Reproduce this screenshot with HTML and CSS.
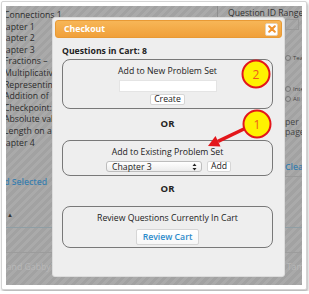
FILE: index.html
```html
<!DOCTYPE html>
<html lang="en">
<head>
    <meta charset="UTF-8">
    <meta name="viewport" content="width=device-width, initial-scale=1.0">
    <title>Checkout</title>
    <link rel="stylesheet" href="styles.css">
</head>
<body>
    <div class="frame">
        <div class="page">
            <div class="columns">
                <div class="side">
                    <ul class="chapters">
                        <li class="sub">Connections 1</li>
                        <li>Chapter 1</li>
                        <li>Chapter 2</li>
                        <li>Chapter 3</li>
                        <li class="sub">Fractions &ndash;</li>
                        <li class="sub">Multiplicative</li>
                        <li class="sub">Representing</li>
                        <li class="sub">Addition of</li>
                        <li class="sub">Checkpoint:</li>
                        <li class="sub">Absolute value</li>
                        <li class="sub">Length on a</li>
                        <li>Chapter 4</li>
                    </ul>
                    <div class="side-link">Add Selected</div>
                </div>
                <div class="filters">
                    <div class="range">Question ID Range:</div>
                    <div class="strip">
                        <div class="range-box"></div>
                        <div class="opt opt-team"><span class="radio"></span>Team</div>
                        <div class="opt opt-inter"><span class="radio"></span>Inter</div>
                        <div class="opt"><span class="radio"></span>All</div>
                        <div class="per">per page</div>
                        <div class="clear">Clear</div>
                    </div>
                </div>
            </div>
            <div class="table">
                <div class="thead"><span class="sort">&#9650;</span></div>
                <div class="trow">Question</div>
                <div class="trow last"></div>
            </div>
            <div class="footnote">Tama's and Gabby's mirrors are back to back at the points on a number line. Tama</div>

            <div class="dialog">
                <div class="dialog-head">
                    <span class="dialog-title">Checkout</span>
                    <span class="close">
                        <svg width="8" height="8" viewBox="0 0 8 8"><path d="M1.2 1.2L6.8 6.8M6.8 1.2L1.2 6.8" stroke="#f0932e" stroke-width="2" stroke-linecap="round"/></svg>
                    </span>
                </div>
                <div class="dialog-body">
                    <div class="count">Questions in Cart: 8</div>
                    <div class="panel panel-new">
                        <div class="panel-title">Add to New Problem Set</div>
                        <input class="text-input" type="text">
                        <div><button class="btn">Create</button></div>
                    </div>
                    <div class="or or-first">OR</div>
                    <div class="panel panel-existing">
                        <div class="panel-title">Add to Existing Problem Set</div>
                        <div class="row">
                            <div class="select">
                                <span>Chapter 3</span>
                                <svg width="5" height="8" viewBox="0 0 5 8"><path d="M0.5 3L2.5 0.6L4.5 3ZM0.5 5L2.5 7.4L4.5 5Z" fill="#222"/></svg>
                            </div>
                            <button class="btn">Add</button>
                        </div>
                    </div>
                    <div class="or or-second">OR</div>
                    <div class="panel panel-review">
                        <div class="panel-title">Review Questions Currently In Cart</div>
                        <button class="btn btn-review">Review Cart</button>
                    </div>
                </div>
            </div>

            <svg class="callouts" width="296" height="279" viewBox="0 0 296 279">
                <circle cx="250" cy="68" r="13.5" fill="#fff200" stroke="#e3161b" stroke-width="2"/>
                <text x="250" y="72.5" text-anchor="middle" class="callout-num">2</text>
                <line x1="240" y1="122" x2="212" y2="135.3" stroke="#e3161b" stroke-width="3.5"/>
                <polygon points="202,140 214.5,140.5 209.5,130" fill="#e3161b"/>
                <circle cx="251" cy="118" r="13.5" fill="#fff200" stroke="#e3161b" stroke-width="2"/>
                <text x="251" y="122.5" text-anchor="middle" class="callout-num">1</text>
            </svg>
        </div>
    </div>
</body>
</html>
```

FILE: styles.css
```css
body {
    margin: 0;
    background-color: #fff;
    font-family: "Open Sans", "Liberation Sans", sans-serif;
}
.frame {
    margin: 1px;
    width: 296px;
    padding: 4px;
    border: 1px solid #d4d4d4;
    border-radius: 2px;
    background-color: #fff;
    box-shadow: 1px 2px 3px rgba(0, 0, 0, 0.3);
}
.page {
    position: relative;
    overflow: hidden;
    height: 279px;
    font-size: 8.7px;
    color: #2c2c2c;
    background: repeating-linear-gradient(135deg, #aaaaaa 0 3px, #a2a2a2 3px 6px);
}
.columns {
    display: grid;
    grid-template-columns: 211px 1fr;
    height: 200px;
}
.chapters {
    list-style: none;
    margin: 0;
    padding: 4px 0 0;
    line-height: 11.6px;
    white-space: nowrap;
}
.chapters li {
    margin-left: -11px;
}
.chapters li.sub {
    margin-left: -2px;
}
.side-link {
    margin-top: 27px;
    margin-left: -13px;
    font-weight: 600;
    color: #3b7fae;
}
.filters {
    border-left: 1px solid #8e8e8e;
    padding-left: 10px;
}
.range {
    line-height: 14px;
    color: #333;
}
.strip {
    margin-left: 57px;
    color: #444;
}
.range-box {
    width: 12px;
    height: 9px;
    margin-top: -1px;
    border: 1px solid #999;
}
.opt {
    display: flex;
    align-items: center;
    gap: 2px;
    font-size: 6px;
    line-height: 10px;
}
.opt-team {
    margin-top: 23px;
}
.opt-inter {
    margin-top: 21px;
}
.radio {
    width: 4px;
    height: 4px;
    border: 1px solid #777;
    border-radius: 50%;
}
.per {
    margin-top: 13px;
    line-height: 10px;
}
.clear {
    margin-top: 25px;
    font-weight: 600;
    color: #3b7fae;
    line-height: 10px;
    padding-bottom: 4px;
    border-bottom: 1px solid #999;
}
.table {
    margin-top: 2px;
}
.thead {
    height: 19px;
    border-bottom: 1px solid #8f9ea4;
}
.sort {
    display: inline-block;
    margin-left: 1px;
    font-size: 6px;
    color: #333;
}
.trow {
    height: 24px;
    line-height: 24px;
    padding-left: 6px;
    color: #b2a58f;
    border-bottom: 1px solid #9c9c9c;
    text-indent: -50px;
    overflow: hidden;
}
.trow.last {
    border-bottom: none;
    height: 8px;
}
.footnote {
    white-space: nowrap;
    margin-left: -30px;
    line-height: 12px;
    color: #b8b8b8;
}

.dialog {
    position: absolute;
    left: 46px;
    top: 11px;
    width: 227px;
    height: 254px;
    padding: 2px;
    border: 1px solid #dcdcdc;
    border-radius: 3px;
    background-color: #eeeeee;
}
.dialog-head {
    display: flex;
    justify-content: space-between;
    align-items: center;
    height: 16px;
    padding: 0 3px 0 8px;
    border: 1px solid #e89a35;
    border-radius: 3px;
    background: linear-gradient(#f7b657, #f0a03a);
}
.dialog-title {
    color: #fff;
    font-weight: 700;
    font-size: 8.7px;
}
.close {
    display: flex;
    align-items: center;
    justify-content: center;
    width: 11px;
    height: 11px;
    border: 1px solid #e6d2b4;
    border-radius: 2px;
    background-color: #fff;
}
.dialog-body {
    padding: 0 9px 0 7px;
}
.count {
    margin-top: 7px;
    line-height: 12px;
    font-weight: 700;
    color: #222;
}
.panel {
    margin-top: 2px;
    padding: 5px 0 3px;
    border: 1px solid #787878;
    border-radius: 8px;
    text-align: center;
    color: #222;
}
.panel-title {
    line-height: 12px;
}
.text-input {
    display: block;
    width: 98px;
    height: 12px;
    margin: 3px auto 1px;
    padding: 0;
    border: 1px solid #e4e4e4;
    box-sizing: border-box;
    background-color: #fff;
}
.btn {
    height: 11px;
    padding: 0 3px;
    border: 1px solid #d6d6d6;
    border-radius: 2px;
    background-color: #fff;
    font-family: inherit;
    font-size: 8.7px;
    line-height: 9px;
    color: #222;
}
.or {
    text-align: center;
    font-weight: 700;
    font-size: 9.5px;
    color: #222;
}
.or-first {
    padding: 8px 0 9px;
    line-height: 14px;
}
.or-second {
    padding: 6px 0 10px;
    line-height: 14px;
}
.or + .panel {
    margin-top: 0;
}
.row {
    display: flex;
    align-items: center;
    gap: 5px;
    margin-top: 3px;
    padding-left: 43px;
}
.select {
    flex: none;
    display: flex;
    justify-content: space-between;
    align-items: center;
    width: 96px;
    height: 11px;
    box-sizing: border-box;
    padding: 0 4px 0 5px;
    border: 1px solid #bdbdbd;
    border-radius: 3px;
    background: linear-gradient(#ffffff, #ececec);
    text-align: left;
}
.btn-review {
    height: 16px;
    margin-top: 5px;
    padding: 0 6px;
    font-weight: 600;
    color: #2b8bcb;
    background: linear-gradient(#ffffff, #f7f7f7);
}
.panel-review {
    padding-bottom: 2px;
}
.callouts {
    position: absolute;
    left: 0;
    top: 0;
}
.callout-num {
    font-family: "Open Sans", sans-serif;
    font-size: 12px;
    fill: #ee5a1c;
}
```
